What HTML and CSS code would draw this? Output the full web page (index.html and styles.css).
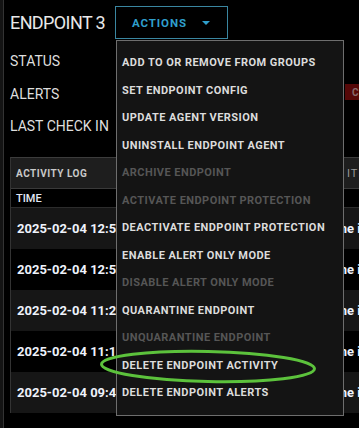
FILE: index.html
```html
<!DOCTYPE html>
<html lang="en">
<head>
<meta charset="utf-8">
<title>Endpoint 3</title>
<link rel="stylesheet" href="styles.css">
</head>
<body>
<div class="screen">
  <div class="rail"></div>
  <div class="main">
    <header class="top">
      <h1 class="title">ENDPOINT 3</h1>
      <div class="actions">
        <button class="actions-btn" type="button">
          <span>ACTIONS</span>
          <svg class="caret" width="8" height="4" viewBox="0 0 8 4"><path d="M0 0H8L4 4Z" fill="#2f9fcc"/></svg>
        </button>
        <ul class="menu">
          <li class="item">ADD TO OR REMOVE FROM GROUPS</li>
          <li class="item">SET ENDPOINT CONFIG</li>
          <li class="item">UPDATE AGENT VERSION</li>
          <li class="item">UNINSTALL ENDPOINT AGENT</li>
          <li class="item disabled">ARCHIVE ENDPOINT</li>
          <li class="item disabled">ACTIVATE ENDPOINT PROTECTION</li>
          <li class="item">DEACTIVATE ENDPOINT PROTECTION</li>
          <li class="item">ENABLE ALERT ONLY MODE</li>
          <li class="item disabled">DISABLE ALERT ONLY MODE</li>
          <li class="item">QUARANTINE ENDPOINT</li>
          <li class="item disabled">UNQUARANTINE ENDPOINT</li>
          <li class="item">DELETE ENDPOINT ACTIVITY</li>
          <li class="item">DELETE ENDPOINT ALERTS</li>
        </ul>
      </div>
    </header>

    <dl class="fields">
      <div class="field"><dt>STATUS</dt><dd></dd></div>
      <div class="field"><dt>ALERTS</dt><dd><span class="badge">CRITICAL</span></dd></div>
      <div class="field"><dt>LAST CHECK IN</dt><dd></dd></div>
    </dl>

    <section class="log">
      <div class="log-head">
        <span class="log-title">ACTIVITY LOG</span>
        <span class="log-extra">ITEMS</span>
      </div>
      <div class="log-cols"><span>TIME</span></div>
      <div class="log-row odd"><span class="time">2025-02-04 12:59:41</span><span class="desc">Done in 2s</span></div>
      <div class="log-row"><span class="time">2025-02-04 12:57:08</span><span class="desc">Done in 4s</span></div>
      <div class="log-row odd"><span class="time">2025-02-04 11:27:52</span><span class="desc">Done in 3s</span></div>
      <div class="log-row"><span class="time">2025-02-04 11:15:30</span><span class="desc">Done in 2s</span></div>
      <div class="log-row odd"><span class="time">2025-02-04 09:43:17</span><span class="desc">Done in 5s</span></div>
    </section>
  </div>

  <svg class="highlight" width="359" height="428" viewBox="0 0 359 428">
    <ellipse cx="208" cy="366.5" rx="106.5" ry="15" transform="rotate(1.2 208 366.5)" fill="none" stroke="#5cc23c" stroke-width="3"/>
  </svg>
</div>
</body>
</html>
```

FILE: styles.css
```css
* { box-sizing: border-box; }

html, body {
  margin: 0;
  padding: 0;
  background: #000;
}

body {
  font-family: Roboto, "Liberation Sans", sans-serif;
  color: #ddd;
}

.screen {
  position: relative;
  width: 359px;
  height: 428px;
  overflow: hidden;
  display: flex;
  background: #000;
}

.rail {
  flex: 0 0 4px;
  background: #141414;
  border-right: 1px solid #333;
}

.main {
  flex: 0 0 auto;
  width: 420px;
  padding-left: 6px;
}

/* header */
.top {
  display: flex;
  align-items: center;
  gap: 11px;
  padding-top: 6px;
  height: 39px;
}

.title {
  margin: 0;
  font-size: 18px;
  font-weight: 400;
  letter-spacing: -0.6px;
  color: #e8e8e8;
  width: 94px;
  white-space: nowrap;
}

.actions {
  position: relative;
}

.actions-btn {
  display: flex;
  align-items: center;
  gap: 15px;
  width: 113px;
  height: 33px;
  padding: 0 0 0 16px;
  background: #000;
  border: 1px solid #3a86a0;
  font-family: Roboto, "Liberation Sans", sans-serif;
  font-size: 11.5px;
  font-weight: 700;
  letter-spacing: 0.9px;
  color: #2f9fcc;
}

.caret { display: block; }

/* dropdown menu */
.menu {
  position: absolute;
  top: 34px;
  left: 1px;
  z-index: 2;
  width: 228px;
  margin: 0;
  padding: 8px 0;
  list-style: none;
  background: #141414;
  border: 1px solid #6e6e6e;
}

.item {
  height: 27.5px;
  display: flex;
  align-items: center;
  padding-left: 5px;
  font-size: 11px;
  font-weight: 700;
  letter-spacing: 0.45px;
  color: #dcdcdc;
  white-space: nowrap;
}

.item.disabled { color: #565656; }

/* fields */
.fields {
  margin: 6px 0 0;
}

.field {
  display: grid;
  grid-template-columns: 335px auto;
  align-items: center;
  height: 32.5px;
}

.field dt {
  font-size: 14px;
  color: #dedede;
}

.field dd {
  margin: 0;
  display: flex;
  align-items: center;
}

.badge {
  display: flex;
  align-items: center;
  height: 16px;
  padding: 0 8px 0 7px;
  background: #560808;
  color: #8a6a6a;
  font-size: 10px;
  font-weight: 700;
  letter-spacing: 0.8px;
  margin-top: -3px;
}

/* activity log */
.log {
  margin-top: 14.5px;
  border-left: 1px solid #333;
  border-top: 1px solid #3c3c3c;
}

.log-head {
  display: grid;
  grid-template-columns: 331px 1fr;
  align-items: center;
  height: 31px;
  background: #1e1e1e;
  border-bottom: 1px solid #3a3a3a;
}

.log-title {
  padding-left: 5px;
  font-size: 10px;
  font-weight: 700;
  letter-spacing: 0.5px;
  color: #c8c8c8;
}

.log-extra {
  padding-left: 5px;
  font-size: 11px;
  letter-spacing: 1px;
  color: #9a9a9a;
}

.log-cols {
  height: 19px;
  display: flex;
  align-items: center;
  padding-left: 5px;
  font-size: 11px;
  font-weight: 500;
  color: #e2e8f4;
  border-bottom: 1px solid #2c2c2c;
}

.log-row {
  display: grid;
  grid-template-columns: 313px 1fr;
  align-items: center;
  height: 41px;
  background: #000;
}

.log-row.odd { background: #161616; }

.time {
  padding-left: 6px;
  font-size: 13px;
  font-weight: 700;
  color: #eef2fb;
  white-space: nowrap;
}

.desc {
  font-size: 13px;
  font-weight: 700;
  color: #eef2fb;
  white-space: nowrap;
}

.highlight {
  position: absolute;
  left: 0;
  top: 0;
  z-index: 3;
  pointer-events: none;
}
```
